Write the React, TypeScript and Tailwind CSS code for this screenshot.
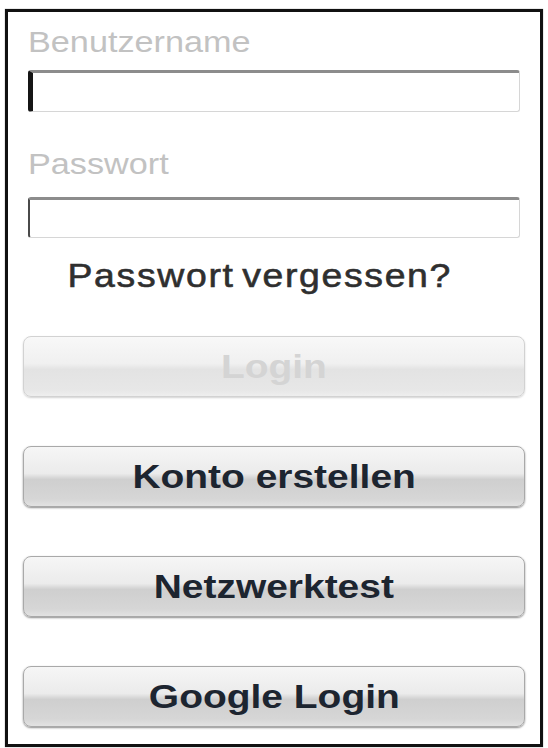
const BUTTONS = [
  { label: "Konto erstellen" },
  { label: "Netzwerktest" },
  { label: "Google Login" },
];

function TextField({ caret }: { caret: "thick" | "thin" }) {
  return (
    <div
      className={`mx-[20px] rounded-[3px] border-t-[3px] border-r border-b border-t-[#8c8c8c] border-r-[#d6d6d6] border-b-[#d6d6d6] bg-white ${
        caret === "thick"
          ? "h-[42px] border-l-[5px] border-l-[#151515]"
          : "h-[41px] border-l-[2px] border-l-[#4a4a4a]"
      }`}
    />
  );
}

function Label({ children }: { children: string }) {
  return (
    <div className="ml-[20px] h-[29px] text-[29px] leading-none text-[#c2c2c2]">
      <span className="inline-block origin-left scale-x-[1.18]">{children}</span>
    </div>
  );
}

export default function App() {
  return (
    <div
      className="min-h-[748px] bg-white pt-[9px] pl-[5px]"
      style={{ fontFamily: '"Liberation Sans", Arial, sans-serif' }}
    >
      <div className="flex h-[738px] w-[538px] flex-col border-[3px] border-[#111] shadow-[0_0_1px_rgba(0,0,0,0.5)]">
        <div className="pt-[16px]">
          <Label>Benutzername</Label>
        </div>
        <div className="mt-[13px]">
          <TextField caret="thick" />
        </div>

        <div className="mt-[38px]">
          <Label>Passwort</Label>
        </div>
        <div className="mt-[18px]">
          <TextField caret="thin" />
        </div>

        <div className="mt-[20px] flex h-[34px] justify-center pr-[29px] text-[34px] leading-none text-[#2f2f2f]">
          <span className="inline-block scale-x-[1.1] tracking-[1.5px] [word-spacing:-4px] [-webkit-text-stroke:0.6px_#2f2f2f]">
            Passwort vergessen?
          </span>
        </div>

        <div className="mt-[44px] flex flex-col gap-[49px] px-[15px]">
          {/* disabled */}
          <div className="flex h-[61px] items-center justify-center rounded-[8px] border border-[#d2d2d2] bg-[linear-gradient(to_bottom,#f8f8f8_0%,#f0f0f0_45%,#e3e3e3_55%,#e7e7e7_90%,#eeeeee_100%)] shadow-[0_1px_2px_rgba(0,0,0,0.18)]">
            <span className="inline-block scale-x-[1.18] text-[33px] leading-none font-bold text-[#d4d4d4]">
              Login
            </span>
          </div>

          {BUTTONS.map((b) => (
            <div
              key={b.label}
              className="flex h-[61px] items-center justify-center rounded-[8px] border border-[#a9a9a9] bg-[linear-gradient(to_bottom,#f6f6f6_0%,#ebebeb_45%,#cfcfcf_55%,#d6d6d6_88%,#e2e2e2_100%)] shadow-[0_1px_2px_rgba(0,0,0,0.45)]"
            >
              <span className="inline-block scale-x-[1.18] text-[33px] leading-none font-bold text-[#1d2530]">
                {b.label}
              </span>
            </div>
          ))}
        </div>
      </div>
    </div>
  );
}
